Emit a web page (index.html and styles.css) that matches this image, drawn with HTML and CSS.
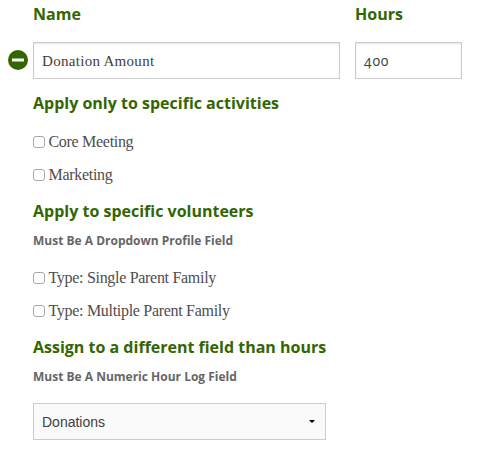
FILE: index.html
```html
<!DOCTYPE html>
<html lang="en">
<head>
<meta charset="utf-8">
<title>Hours</title>
<link rel="stylesheet" href="styles.css">
</head>
<body>
<form class="form">
  <div class="fields">
    <label class="title" for="name">Name</label>
    <label class="title" for="hours">Hours</label>
    <div class="name-cell">
      <svg class="remove" viewBox="0 0 20 20"><circle cx="10" cy="10" r="10" fill="#360"/><path fill="#fff" d="M4 8.5h12v3H4z"/></svg>
      <input class="box name" id="name" type="text" value="Donation Amount">
    </div>
    <input class="box hours" id="hours" type="text" value="400">
  </div>
  <section class="group activities">
    <h3 class="title">Apply only to specific activities</h3>
    <div class="options">
      <label class="option"><input class="check" type="checkbox"><span>Core Meeting</span></label>
      <label class="option"><input class="check" type="checkbox"><span>Marketing</span></label>
    </div>
  </section>
  <section class="group volunteers">
    <h3 class="title">Apply to specific volunteers</h3>
    <p class="hint">Must Be A Dropdown Profile Field</p>
    <div class="options">
      <label class="option"><input class="check" type="checkbox"><span>Type: Single Parent Family</span></label>
      <label class="option"><input class="check" type="checkbox"><span>Type: Multiple Parent Family</span></label>
    </div>
  </section>
  <section class="group assign">
    <h3 class="title">Assign to a different field than hours</h3>
    <p class="hint">Must Be A Numeric Hour Log Field</p>
    <div class="select"><span>Donations</span><svg class="arrow" viewBox="0 0 6 3"><path d="M0 0h6L3 3z"/></svg></div>
  </section>
</form>
</body>
</html>
```

FILE: styles.css
```css
* { box-sizing: border-box; }
body { margin: 0; background: #fff; color: #4d4d4d; font-family: "Liberation Serif", serif; }
.form { padding: 3px 15px 0 33px; }
.title { display: block; margin: 0; font: bold 16px/22px "Open Sans", sans-serif; color: #360; }
.fields { display: grid; grid-template-columns: 307px 107px; column-gap: 15px; row-gap: 17px; }
.name-cell { display: flex; align-items: center; margin-left: -25px; gap: 5px; }
.remove { width: 20px; height: 20px; margin-top: -1px; flex: none; }
.box { width: 100%; height: 37px; margin: 0; padding: 0 8px; border: 1px solid #ccc; border-radius: 0; box-shadow: inset 0 1px 2px rgba(0,0,0,.1); background: #fff; color: #404040; outline: 0; font: 15px "Liberation Serif", serif; }
.name { padding-top: 2px; letter-spacing: .3px; }
.hours { font: 14px "Open Sans", sans-serif; font-variant-numeric: oldstyle-nums; letter-spacing: .8px; }
.group { display: flex; flex-direction: column; }
.activities { margin-top: 13px; }
.activities .options { margin-top: 12px; }
.volunteers, .assign { margin-top: 8px; }
.volunteers .options { margin-top: 13px; }
.hint { margin: 11px 0 0; font: bold 12px/16px "Open Sans", sans-serif; color: #666; }
.option { display: flex; align-items: center; gap: 3.5px; height: 33px; font-size: 16px; line-height: 20px; letter-spacing: -.3px; white-space: nowrap; }
.option span { margin-top: -2px; }
.check { appearance: none; width: 12px; height: 12px; margin: -2px 0 0; border: 1px solid #a8a8a8; border-radius: 3px; background: #fff; }
.select { display: flex; align-items: center; justify-content: space-between; width: 293px; height: 37px; margin-top: 18px; padding: 0 10px 0 8px; border: 1px solid #ccc; background: #fafafa; color: #404040; font: 14px "Liberation Sans", sans-serif; }
.arrow { width: 6px; height: 3px; fill: #000; }
```
